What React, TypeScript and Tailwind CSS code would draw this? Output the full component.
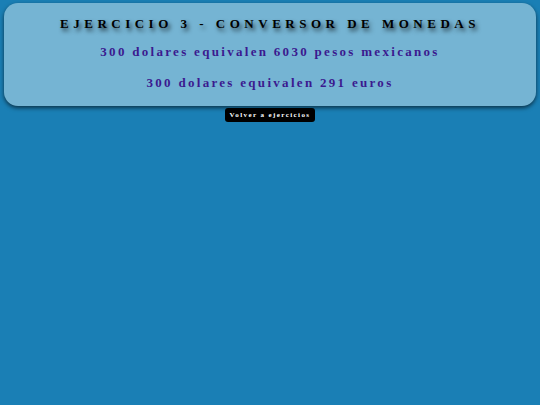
export default function App() {
  return (
    <div className="min-h-screen bg-[#1a7fb5] pt-[3px] px-[4px] font-['Liberation_Serif',serif]">
      {/* Card */}
      <div className="rounded-[14px] bg-[#75b4d3] shadow-[0_2px_4px_rgba(0,0,0,0.6)] pt-[12px] pb-[14px] text-center">
        <h1 className="text-[13px] font-bold tracking-[4.5px] text-black leading-[18px] [text-shadow:2px_3px_4px_rgba(0,0,0,0.75)]">
          EJERCICIO 3 - CONVERSOR DE MONEDAS
        </h1>
        <p className="mt-[10px] text-[13px] font-bold tracking-[2.3px] text-[#3b1a8f] leading-[18px]">
          300 dolares equivalen 6030 pesos mexicanos
        </p>
        <p className="mt-[13px] text-[13px] font-bold tracking-[2.3px] text-[#3b1a8f] leading-[18px]">
          300 dolares equivalen 291 euros
        </p>
      </div>
      <div className="flex justify-center mt-[2px]">
        <button className="bg-black text-white rounded-[3px] px-[5px] h-[14px] text-[7px] font-bold tracking-[1.4px] leading-[14px]">
          Volver a ejercicios
        </button>
      </div>
    </div>
  );
}
